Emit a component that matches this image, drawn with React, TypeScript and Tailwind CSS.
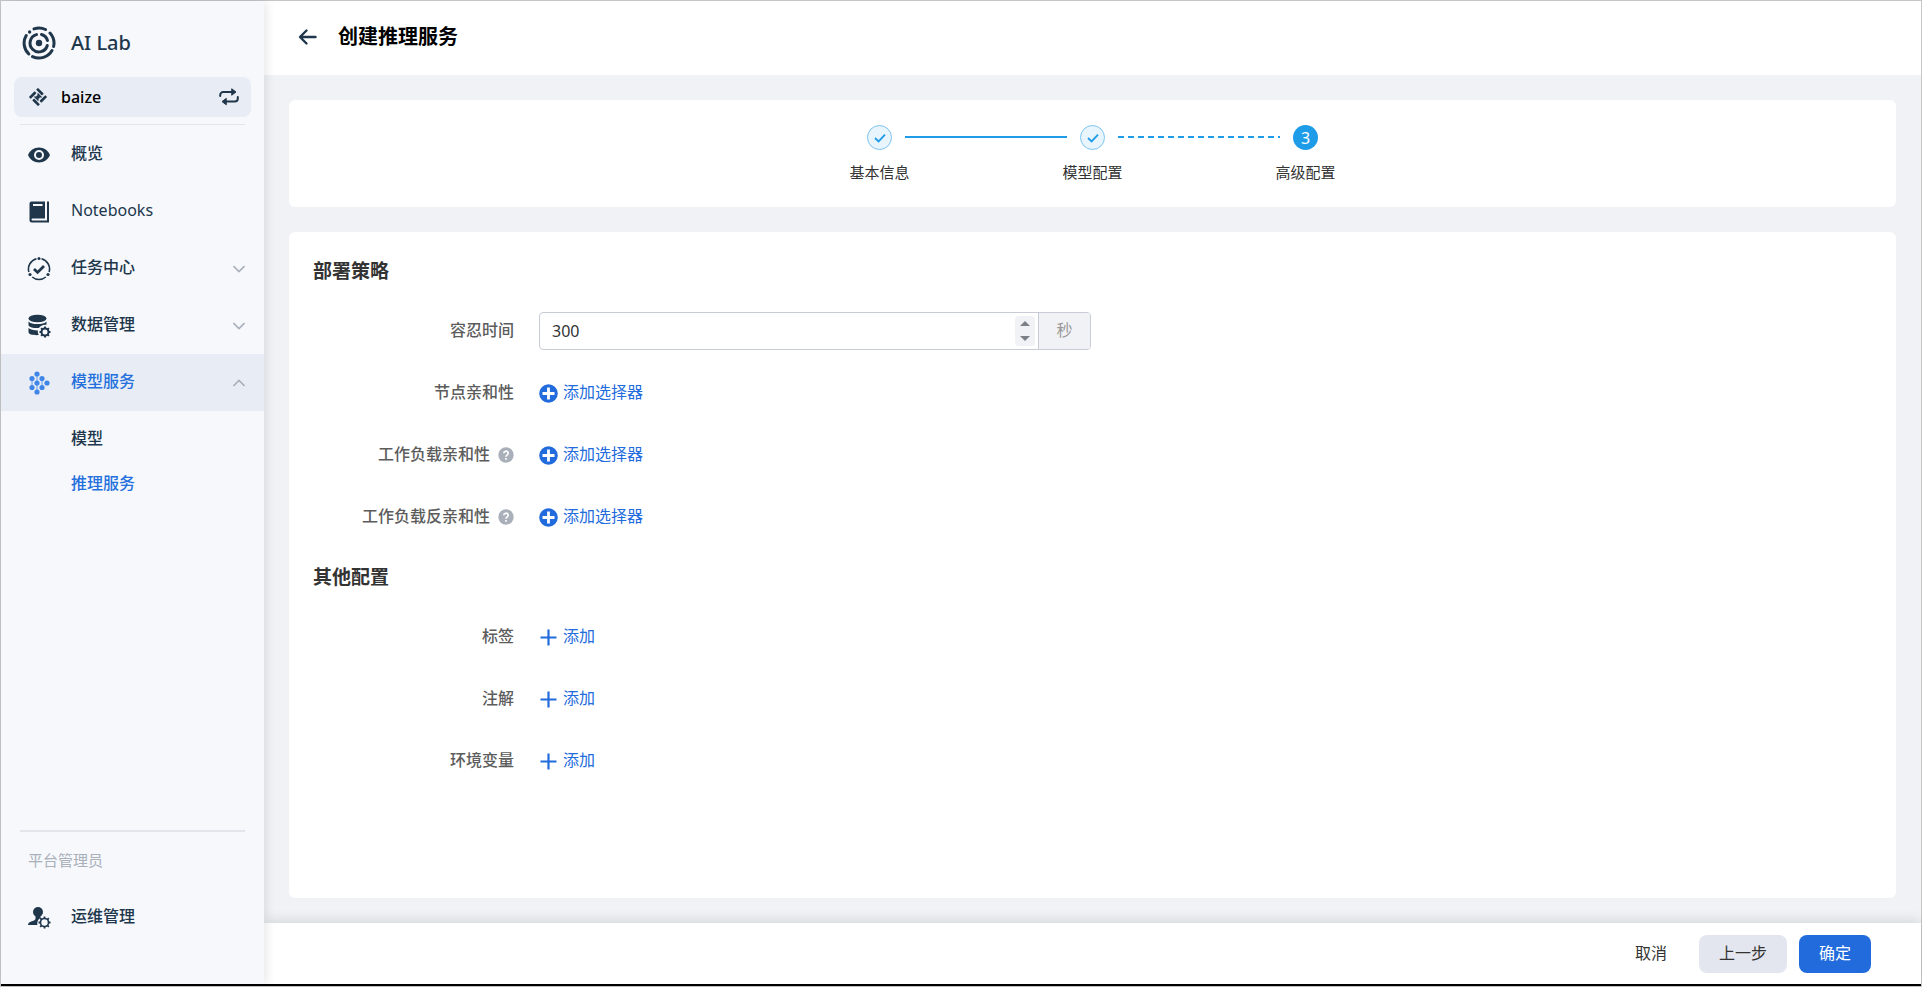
import React from 'react'

const CheckIcon = ({ className = '' }: { className?: string }) => (
  <svg className={className} viewBox="0 0 12 12" fill="none" stroke="currentColor" strokeWidth="1.8">
    <path d="M1 6 4.6 9.4 11 2.6" />
  </svg>
)

const LogoIcon = () => (
  <svg className="size-[34px]" viewBox="0 0 34 34" fill="none" stroke="currentColor" strokeWidth="3" strokeLinecap="round">
    <path d="M12 2.9A15 15 0 0 1 23.5 3.500" />
    <path d="M28 7A15 15 0 0 1 31.600 20.500" />
    <path d="M30 24.500A15 15 0 0 1 10.500 30.600" />
    <path d="M6.800 28A15 15 0 0 1 4.200 9.500" />
    <path d="M14.500 8.600A8.800 8.800 0 1 0 25.300 19.500M19.500 8.500A8.800 8.800 0 0 1 25.500 14.500" />
    <circle cx="7.600" cy="6" r="1.700" fill="currentColor" stroke="none" />
    <circle cx="17" cy="17" r="3.200" fill="currentColor" stroke="none" />
  </svg>
)

const WorkspaceIcon = () => (
  <svg className="size-5" viewBox="0 0 20 20" fill="currentColor">
    <g transform="rotate(45 10 10)">
      <rect x="3.500" y="3.500" width="8.200" height="2.700" rx="0.500" />
      <rect x="13.800" y="3.500" width="2.700" height="8.200" rx="0.500" />
      <rect x="8.300" y="13.800" width="8.200" height="2.700" rx="0.500" />
      <rect x="3.500" y="8.300" width="2.700" height="8.200" rx="0.500" />
      <path d="M7.200 7.200h5.600v1.300H7.200ZM7.200 11.500h5.600v1.300H7.200Z" />
      <rect x="8.300" y="8.300" width="3.400" height="3.400" />
    </g>
  </svg>
)

const SwapIcon = () => (
  <svg className="size-5" viewBox="0 0 20 20" fill="none" stroke="currentColor" strokeWidth="2" strokeLinecap="round">
    <path d="M1.200 9V8a3 3 0 0 1 3-3H14M18.800 10v1.600a3 3 0 0 1-3 3H6" />
    <path d="m13 2 4 3-4 3ZM7 11.600l-4 3 4 3Z" fill="currentColor" strokeWidth="1" strokeLinejoin="round" />
  </svg>
)

const EyeIcon = () => (
  <svg className="size-6" viewBox="0 0 24 24" fill="currentColor">
    <path fillRule="evenodd" d="M12 4.500C7 4.500 2.700 7.600 1 12c1.700 4.400 6 7.500 11 7.500s9.300-3.100 11-7.500c-1.700-4.400-6-7.500-11-7.500Zm0 12.500a5 5 0 1 1 0-10 5 5 0 0 1 0 10Zm0-8a3 3 0 1 0 0 6 3 3 0 0 0 0-6Z" />
  </svg>
)

const BookIcon = () => (
  <svg className="size-6" viewBox="0 0 24 24" fill="currentColor">
    <path fillRule="evenodd" d="M4.500 1.500H18v17H5.500a1 1 0 0 0 0 2H20v-19h2v21H5a2.500 2.500 0 0 1-2.500-2.500V3.500a2 2 0 0 1 2-2ZM6 4v2h9.500V4Z" />
  </svg>
)

const TaskIcon = () => (
  <svg className="size-6" viewBox="0 0 24 24" fill="none" stroke="currentColor" strokeWidth="1.600">
    <path d="M14.500 1.800A10.500 10.500 0 0 1 22.100 15M18.800 20a10.500 10.500 0 0 1-13.600 0M1.900 15A10.500 10.500 0 0 1 9.500 1.800" />
    <path d="m7 12 3.600 3.400 6.400-6.400" strokeWidth="2.800" />
    <circle cx="12" cy="1.500" r="1.500" fill="currentColor" stroke="none" />
    <circle cx="21" cy="17.500" r="1.600" fill="currentColor" stroke="none" />
    <circle cx="3" cy="17.500" r="1.600" fill="currentColor" stroke="none" />
  </svg>
)

const gearTeeth = 'M18 12.500v2M18 21.500v2M12.500 18h2M21.500 18h2M14.100 14.100l1.400 1.400M20.500 20.500l1.400 1.400M14.100 21.900l1.400-1.400M20.500 15.500l1.400-1.400'

const DatabaseIcon = () => (
  <svg className="size-6" viewBox="0 0 24 24" fill="currentColor">
    <ellipse cx="10.500" cy="4.500" rx="9" ry="3.800" />
    <path d="M1.500 7.500c1.500 1.800 5 2.600 9 2.600s7.500-.8 9-2.600v3.300c-3-.5-6.500.8-7.600 3.200-5 .2-9.400-.6-10.400-2.800ZM1.500 14c1.600 1.700 5 2.400 9.400 2.400-.2 1.600.1 3.300 1 4.700-5.500.3-10.400-.6-10.400-3.100Z" />
    <circle cx="18" cy="18" r="3.500" fill="none" stroke="currentColor" strokeWidth="2" />
    <path d={gearTeeth} fill="none" stroke="currentColor" strokeWidth="2" />
  </svg>
)

const ModelIcon = () => (
  <svg className="size-6 text-[#4086e8]" viewBox="0 0 24 24" fill="currentColor">
    <path d="M10 3v18M5 7.500v9M15 7.500v9" fill="none" stroke="currentColor" strokeWidth="0.800" />
    <circle cx="10" cy="3" r="2.600" />
    <circle cx="5" cy="7.500" r="2.600" />
    <circle cx="15" cy="7.500" r="2.600" />
    <circle cx="10" cy="12" r="2.600" />
    <circle cx="20" cy="12" r="2.600" />
    <circle cx="5" cy="16.500" r="2.600" />
    <circle cx="15" cy="16.500" r="2.600" />
    <circle cx="10" cy="21" r="2.600" />
  </svg>
)

const AdminIcon = () => (
  <svg className="size-6" viewBox="0 0 24 24" fill="currentColor">
    <circle cx="11" cy="7" r="5" />
    <path d="M8.500 10h5v3c-2.200 1-3.500 3-3.200 7H1c0-2.500 2-3 4-3.700 2-.6 3.500-1.200 3.500-2.800Z" />
    <circle cx="17.500" cy="17.500" r="4" fill="#f6f8fc" stroke="currentColor" strokeWidth="1.600" />
    <path d="M17.500 11.500v2M17.500 21.500v2M11.500 17.500h2M21.500 17.500h2M13.200 13.200l1.400 1.400M20.400 20.400l1.400 1.400M13.200 21.800l1.400-1.400M20.400 14.600l1.400-1.400" fill="none" stroke="currentColor" strokeWidth="1.800" />
  </svg>
)

const BackIcon = () => (
  <svg className="size-5" viewBox="0 0 20 20" fill="none" stroke="currentColor" strokeWidth="2.400" strokeLinecap="round" strokeLinejoin="round">
    <path d="M17.500 10H2.500M8.500 3.500 2 10l6.500 6.500" />
  </svg>
)

const ChevronIcon = ({ up }: { up?: boolean }) => (
  <svg className="size-3 text-[#a9b0ba]" viewBox="0 0 12 12" fill="none" stroke="currentColor" strokeWidth="1.600">
    <path d={up ? 'M.5 9 6 3.500 11.500 9' : 'M.5 3 6 8.500 11.500 3'} />
  </svg>
)

const HelpIcon = () => (
  <svg className="size-4" viewBox="0 0 16 16" fill="none">
    <circle cx="8" cy="8" r="7.700" fill="#a9b0b9" />
    <path d="M5.800 6.300a2.200 2.100 0 1 1 3.300 1.800C8.300 8.600 8 8.900 8 9.800M8 11v1.700" stroke="#fff" strokeWidth="1.700" />
  </svg>
)

const PlusCircleIcon = () => (
  <svg className="size-[19px]" viewBox="0 0 19 19" fill="none">
    <circle cx="9.500" cy="9.500" r="9.300" fill="currentColor" />
    <path d="M9.500 3.500v12M3.500 9.500h12" stroke="#fff" strokeWidth="2.800" />
  </svg>
)

const PlusIcon = () => (
  <svg className="size-[19px]" viewBox="0 0 19 19" fill="none" stroke="currentColor" strokeWidth="2.200">
    <path d="M9.500 1.500v16M1.500 9.500h16" />
  </svg>
)

const navItems = [
  { title: '概览', icon: <EyeIcon /> },
  { title: 'Notebooks', icon: <BookIcon /> },
  { title: '任务中心', icon: <TaskIcon />, expandable: true },
  { title: '数据管理', icon: <DatabaseIcon />, expandable: true },
  { title: '模型服务', icon: <ModelIcon />, expandable: true, active: true },
]

const Sidebar = () => (
  <aside className="z-10 flex w-[263px] shrink-0 flex-col bg-[#f6f8fc] text-[#20364b] shadow-[2px_0_10px_rgba(0,0,0,0.1)]">
    <div className="flex h-[76px] items-center gap-[15px] pt-2 pl-[21px]">
      <LogoIcon />
      <span className="text-xl font-medium">AI Lab</span>
    </div>
    <button type="button" className="mx-[13px] flex h-10 items-center rounded-lg bg-[#e8edf5] pr-3 pl-[14px]">
      <WorkspaceIcon />
      <span className="ml-[13px] flex-1 text-left font-medium text-black">baize</span>
      <SwapIcon />
    </button>
    <hr className="mx-[19px] mt-[7px] border-[#e2e5ec]" />

    <nav className="flex flex-col pt-px">
      {navItems.map((item) => (
        <a
          key={item.title}
          href="#"
          className={`flex h-[57px] items-center pr-[19px] pl-[26px] ${
            item.active ? 'bg-[#e8edf5] text-[#2470dc]' : ''
          } ${item.title === 'Notebooks' ? '' : 'font-medium'}`}
        >
          {item.icon}
          <span className="ml-5 flex-1 pb-1">{item.title}</span>
          {item.expandable && <ChevronIcon up={item.active} />}
        </a>
      ))}
      <a href="#" className="mt-1 flex h-[45px] items-center pl-[70px] font-medium">模型</a>
      <a href="#" className="flex h-[45px] items-center pl-[70px] font-medium text-[#2470dc]">推理服务</a>
    </nav>

    <div className="mt-auto pb-[39px]">
      <hr className="mx-[19px] border-t-2 border-[#e2e5ec]" />
      <p className="mt-4 pl-[27px] text-[15px] leading-6 text-[#a9b0ba]">平台管理员</p>
      <a href="#" className="mt-4 flex h-[57px] items-center pl-[26px] font-medium">
        <AdminIcon />
        <span className="ml-5 pb-0.5">运维管理</span>
      </a>
    </div>
  </aside>
)

const steps = [
  { title: '基本信息', done: true },
  { title: '模型配置', done: true },
  { title: '高级配置', done: false },
]

const Steps = () => (
  <ol className="flex h-[107px] justify-center gap-[13px] rounded-md bg-white pt-[25px]">
    {steps.map((step, index) => (
      <React.Fragment key={step.title}>
        {index > 0 && (
          <li
            aria-hidden="true"
            className={`mt-[11px] h-0.5 w-[162px] ${
              step.done
                ? 'bg-[#1f9ce8]'
                : 'bg-[repeating-linear-gradient(90deg,#1f9ce8_0_6px,transparent_6px_10px)]'
            }`}
          />
        )}
        <li className="flex w-[25px] flex-col items-center gap-3">
          <span
            className={`flex size-[25px] shrink-0 items-center justify-center rounded-full ${
              step.done
                ? 'border border-[#7cc4f1] bg-[#e9f5fd] text-[#1f9ce8]'
                : 'bg-[#1f9ce8] text-white'
            }`}
          >
            {step.done ? <CheckIcon className="size-3" /> : index + 1}
          </span>
          <span className="text-[15px] leading-5 whitespace-nowrap text-[#333]">{step.title}</span>
        </li>
      </React.Fragment>
    ))}
  </ol>
)

interface FormRowProps {
  label: string
  help?: boolean
  htmlFor?: string
  children: React.ReactNode
}

const FormRow = ({ label, help, htmlFor, children }: FormRowProps) => (
  <div className="flex h-[38px] items-center gap-[25px]">
    <div className="flex w-[201px] items-center justify-end gap-2 text-[#5c5c5c]">
      <label htmlFor={htmlFor} className="pb-0.5 font-medium">{label}</label>
      {help && <HelpIcon />}
    </div>
    {children}
  </div>
)

const AddButton = ({ id, icon, text }: { id: string; icon: React.ReactNode; text: string }) => (
  <button id={id} type="button" className="flex items-center gap-[5px] text-[#226bdc]">
    {icon}
    <span className="pb-0.5">{text}</span>
  </button>
)

export default function App() {
  return (
    <div className="flex min-h-screen flex-col border border-[#c6c6c6] bg-black pb-0.5 font-['Noto_Sans','Noto_Sans_CJK_SC',sans-serif] text-base text-[#333]">
      <div className="flex flex-1">
        <Sidebar />
        <div className="flex min-w-0 flex-1 flex-col bg-[#f0f2f6]">
          <header className="flex h-[74px] items-center gap-5 bg-white pb-0.5 pl-[34px]">
            <button type="button" aria-label="返回" className="text-[#20364b]">
              <BackIcon />
            </button>
            <h1 className="text-xl font-bold text-black">创建推理服务</h1>
          </header>

          <main className="flex flex-1 flex-col gap-[25px] p-[25px]">
            <Steps />
            <section className="flex-1 rounded-md bg-white px-6 pt-[25px]">
              <h2 className="text-[19px] leading-7 font-bold">部署策略</h2>
              <div className="mt-[27px] flex flex-col gap-6">
                <FormRow label="容忍时间" htmlFor="toleration">
                  <div className="flex h-[38px] w-[552px] rounded border border-[#c8ccd6]">
                    <div className="flex flex-1 items-center pr-[3px]">
                      <input id="toleration" type="text" inputMode="numeric" defaultValue="300" className="min-w-0 flex-1 bg-transparent pl-3 outline-none" />
                      <div className="flex h-[30px] w-5 flex-col items-center justify-around rounded bg-[#f1f2f6] text-[#7b8087]">
                        <button type="button" aria-label="增加">
                          <svg className="h-[5px] w-[10px]" viewBox="0 0 10 5" fill="currentColor"><path d="M0 5 5 0l5 5Z" /></svg>
                        </button>
                        <button type="button" aria-label="减少">
                          <svg className="h-[5px] w-[10px]" viewBox="0 0 10 5" fill="currentColor"><path d="M0 0l5 5 5-5Z" /></svg>
                        </button>
                      </div>
                    </div>
                    <span className="flex w-[52px] items-center justify-center rounded-r-[3px] border-l border-[#c8ccd6] bg-[#f1f2f6] pb-0.5 text-[#999]">秒</span>
                  </div>
                </FormRow>
                <FormRow label="节点亲和性" htmlFor="node">
                  <AddButton id="node" icon={<PlusCircleIcon />} text="添加选择器" />
                </FormRow>
                <FormRow label="工作负载亲和性" help htmlFor="workload">
                  <AddButton id="workload" icon={<PlusCircleIcon />} text="添加选择器" />
                </FormRow>
                <FormRow label="工作负载反亲和性" help htmlFor="anti-workload">
                  <AddButton id="anti-workload" icon={<PlusCircleIcon />} text="添加选择器" />
                </FormRow>
              </div>

              <h2 className="mt-[27px] text-[19px] leading-7 font-bold">其他配置</h2>
              <div className="mt-[27px] flex flex-col gap-6">
                <FormRow label="标签" htmlFor="labels">
                  <AddButton id="labels" icon={<PlusIcon />} text="添加" />
                </FormRow>
                <FormRow label="注解" htmlFor="annotations">
                  <AddButton id="annotations" icon={<PlusIcon />} text="添加" />
                </FormRow>
                <FormRow label="环境变量" htmlFor="env">
                  <AddButton id="env" icon={<PlusIcon />} text="添加" />
                </FormRow>
              </div>
            </section>
          </main>

          <footer className="flex h-[61px] items-center justify-end gap-3 bg-white pr-[50px] shadow-[0_-2px_12px_rgba(0,0,0,0.12)]">
            <button type="button" className="h-[38px] rounded-lg px-5 pb-0.5">取消</button>
            <button type="button" className="h-[38px] rounded-lg bg-[#e3e6ee] px-5 pb-0.5">上一步</button>
            <button type="button" className="h-[38px] rounded-lg bg-[#226bdc] px-5 pb-0.5 text-white">确定</button>
          </footer>
        </div>
      </div>
    </div>
  )
}
